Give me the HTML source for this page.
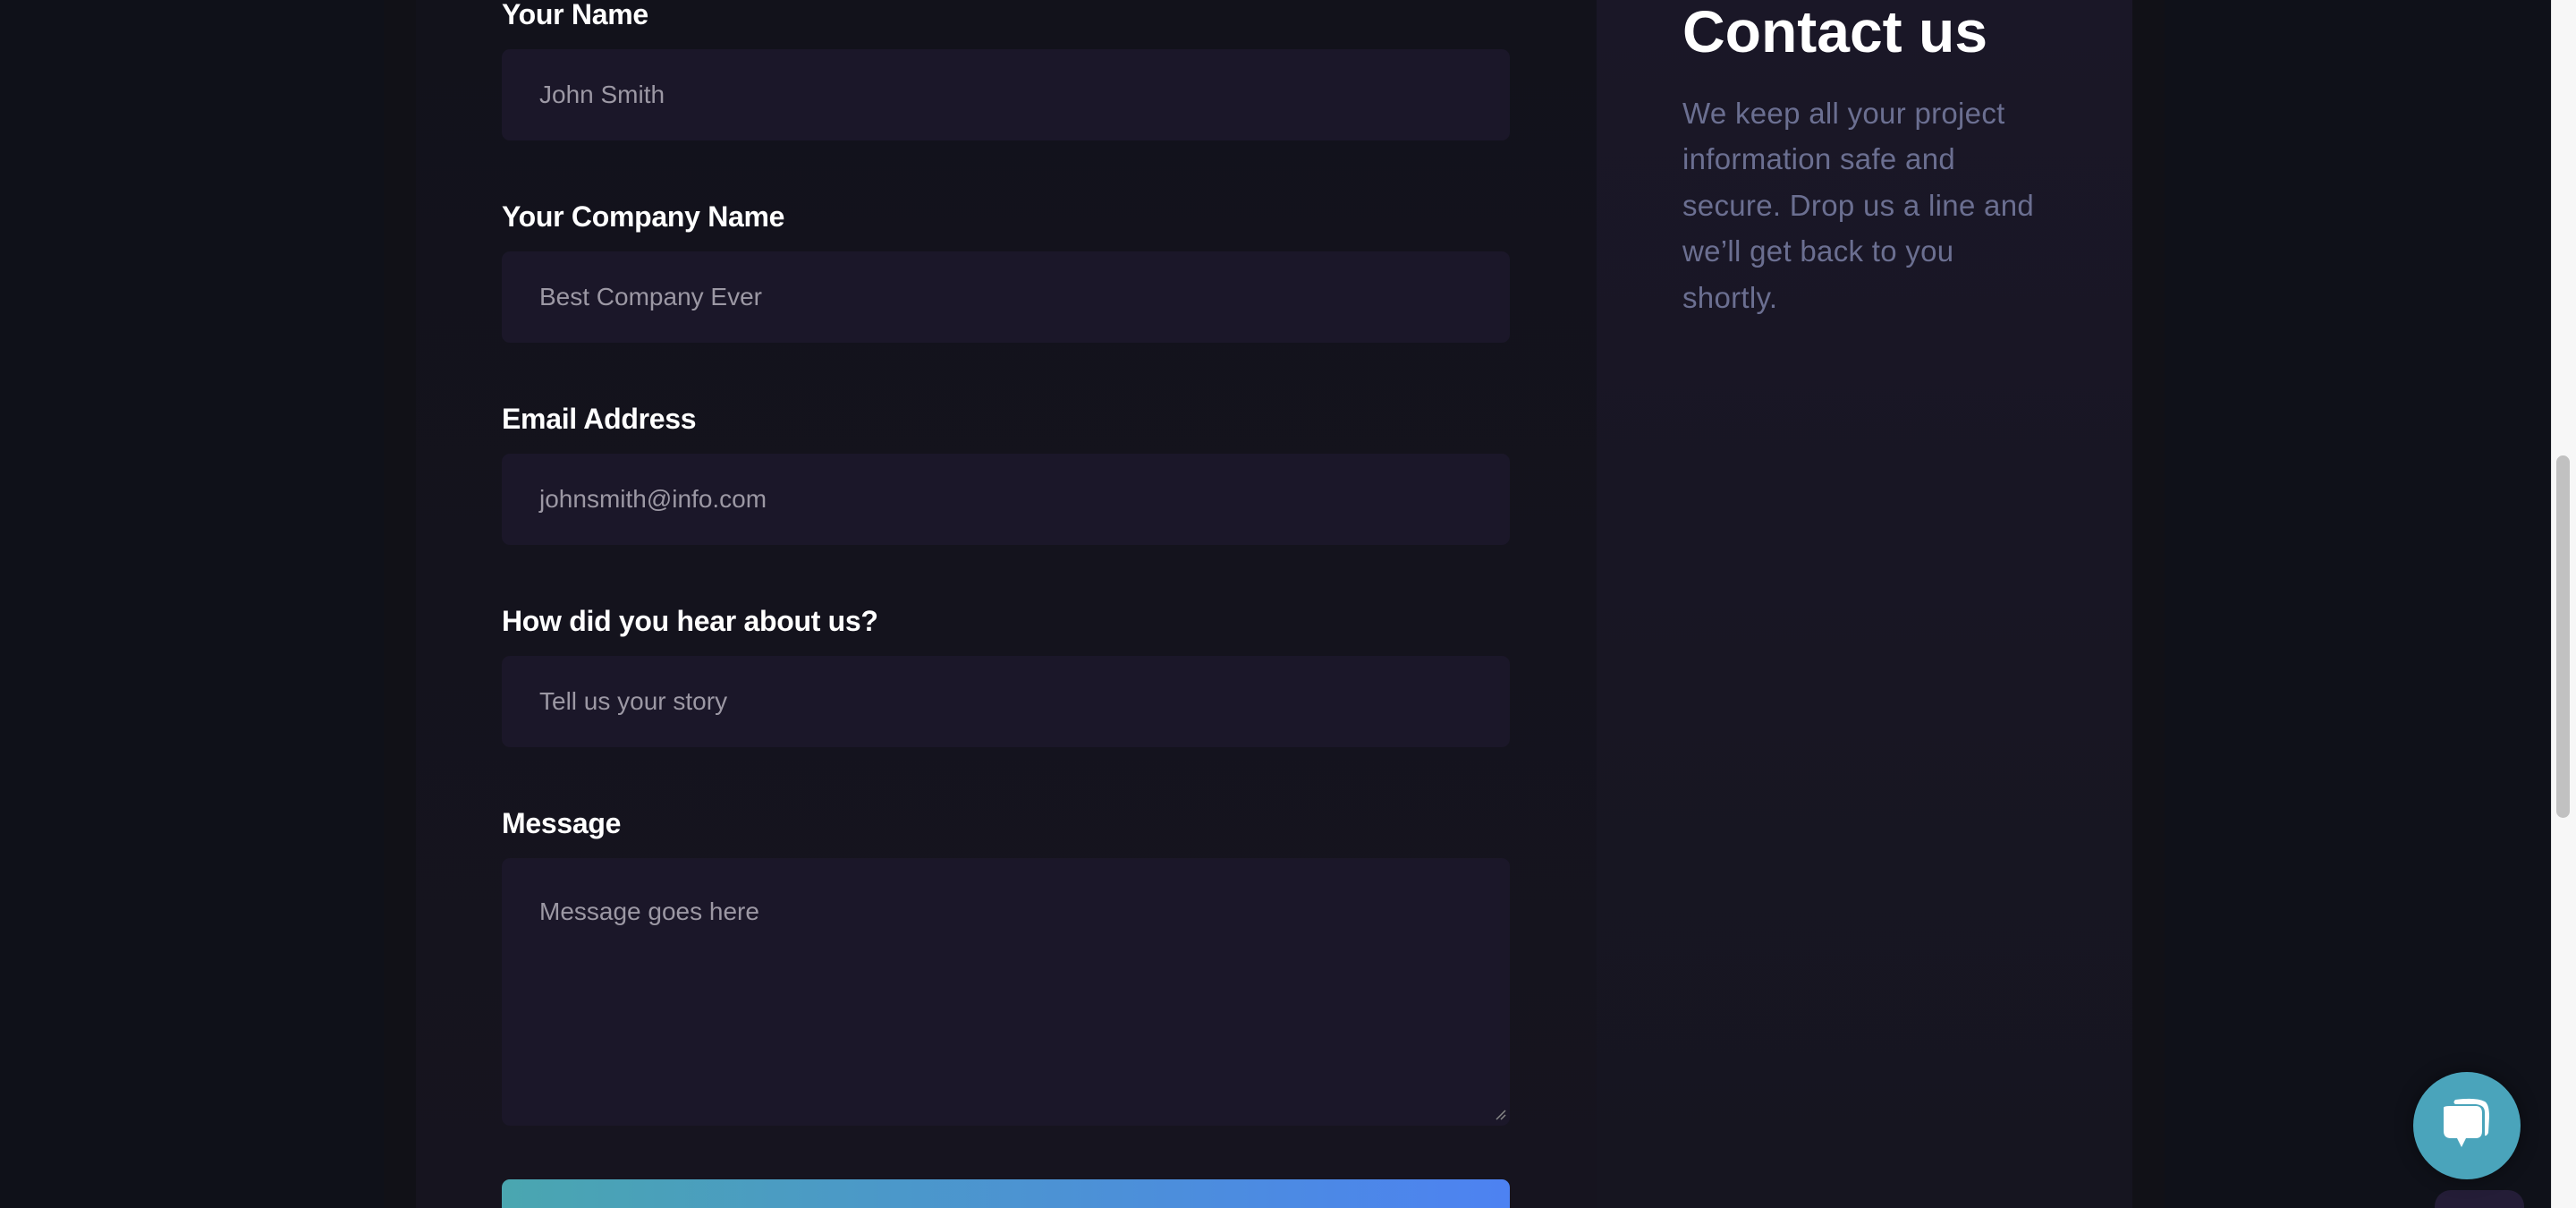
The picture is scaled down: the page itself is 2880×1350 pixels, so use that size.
<!DOCTYPE html>
<html><head><meta charset="utf-8"><style>
html,body{margin:0;padding:0;width:2880px;height:1350px;overflow:hidden;background:#0f1119;font-family:"Liberation Sans",sans-serif}
#w{position:relative;width:2880px;height:1350px;overflow:hidden}
.band{position:absolute;left:429px;top:0;width:36px;height:1350px;background:#111117}
.band2{position:absolute;left:2384px;top:0;width:36px;height:1350px;background:#111117}
.form{position:absolute;left:465px;top:0;width:1320px;height:1350px;background:linear-gradient(180deg,#12121b 0%,#16141f 100%)}
.side{position:absolute;left:1785px;top:0;width:599px;height:1350px;background:linear-gradient(180deg,#1a1727 0%,#161520 100%)}
.lab{position:absolute;left:561px;color:#fff;font-size:32px;font-weight:bold;letter-spacing:-0.3px}
.fld{position:absolute;left:561px;width:1127px;height:102px;background:#1b1729;border-radius:9px}
.fld span{position:absolute;left:42px;top:50%;transform:translateY(-50%);color:#9c98a4;font-size:28px}
h1{position:absolute;left:1881px;top:-3px;margin:0;color:#fff;font-size:66px;font-weight:700}
p{position:absolute;left:1881px;top:101px;margin:0;width:395px;color:#6b6f91;font-size:33px;line-height:51.4px;letter-spacing:0.3px}
.btn{position:absolute;left:561px;top:1318px;width:1127px;height:32px;border-radius:9px 9px 0 0;background:linear-gradient(90deg,#4aa6b0,#4d82f2)}
.chat{position:absolute;left:2698px;top:1198px;width:120px;height:120px;border-radius:50%;background:#4aa4bb;box-shadow:0 0 20px rgba(0,0,0,.4)}
.small{position:absolute;left:2722px;top:1330px;width:100px;height:20px;border-radius:18px 18px 0 0;background:#241d37}
.sb{position:absolute;left:2852px;top:0;width:28px;height:1350px;background:#f7f7f7;border-left:1px solid #e6e6e6}
.th{position:absolute;left:2858px;top:509px;width:15px;height:405px;background:#c1c1c1;border-radius:8px}
</style></head><body><div id="w">
<div class="band"></div><div class="band2"></div>
<div class="form"></div>
<div class="side"></div>
<div class="lab" style="top:-2px">Your Name</div>
<div class="fld" style="top:55px"><span>John Smith</span></div>
<div class="lab" style="top:224px">Your Company Name</div>
<div class="fld" style="top:281px"><span>Best Company Ever</span></div>
<div class="lab" style="top:450px">Email Address</div>
<div class="fld" style="top:507px"><span>johnsmith@info.com</span></div>
<div class="lab" style="top:676px">How did you hear about us?</div>
<div class="fld" style="top:733px"><span>Tell us your story</span></div>
<div class="lab" style="top:902px">Message</div>
<div class="fld" style="top:959px;height:299px"><span style="top:44px;transform:none">Message goes here</span>
<svg style="position:absolute;right:4px;bottom:6px" width="12" height="12"><path d="M11 1L1 11M11 6L6 11" stroke="#888" stroke-width="1.5"/></svg></div>
<div class="btn"></div>
<h1>Contact us</h1>
<p>We keep all your project information safe and secure. Drop us a line and we’ll get back to you shortly.</p>
<div class="small"></div>
<div class="chat"><svg width="120" height="120" viewBox="0 0 120 120">
<path d="M47 31 Q70 28 80 33 Q85 36 85 50 L84 68 Q82 72 80 71 L80 45 Q80 37 70 36 L47 36 Q44 34 47 31Z" fill="#fff"/>
<path d="M34 40 Q34 38 42 38 L70 38 Q77 38 77 46 L77 66 Q77 74 70 74 L59 74 L54 84 L49 74 L42 74 Q34 74 34 66Z" fill="#fff"/>
</svg></div>
<div class="sb"></div><div class="th"></div>
</div></body></html>
